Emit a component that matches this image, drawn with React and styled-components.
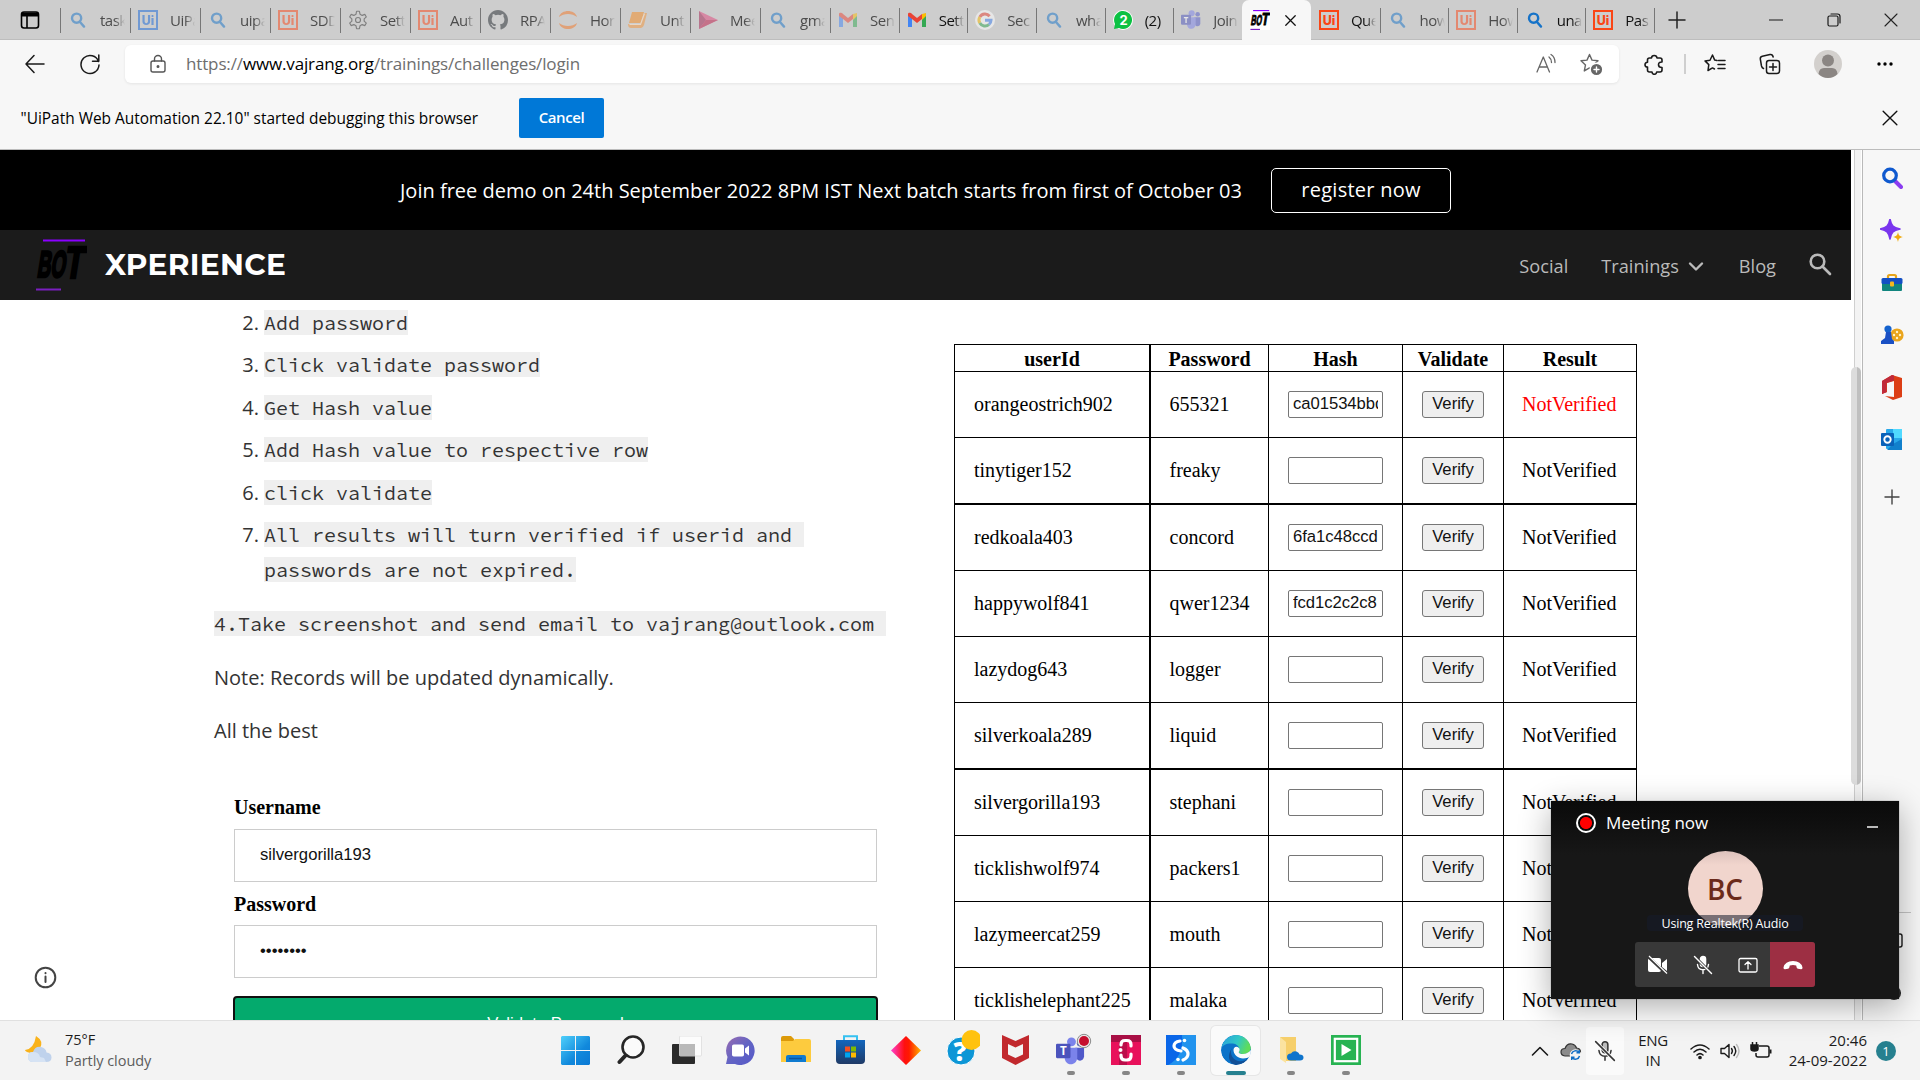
import React from "react";
import styled, { createGlobalStyle, css } from "styled-components";

const UI = `"Open Sans", "Noto Sans", sans-serif`;

const Global = createGlobalStyle`
  *, *::before, *::after { box-sizing: border-box; }
  body { margin: 0; background: #fff; overflow: hidden; }
  svg { display: block; flex: none; }
  button, input { margin: 0; }
`;

const Screen = styled.div`
  position: relative;
  display: flex;
  flex-direction: column;
  width: 1920px;
  height: 1080px;
  overflow: hidden;
  background: #fff;
  font-family: ${UI};
  color: #111;
`;

/* ---------- tab strip ---------- */

const TabStrip = styled.div`
  display: flex;
  flex: none;
  height: 40px;
  background: #cdcdcd;
  box-shadow: inset 0 -1px 0 #bdbdbd;
`;

const TabActions = styled.div`
  display: flex;
  align-items: center;
  justify-content: center;
  width: 60px;
`;

const TabItem = styled.div`
  display: flex;
  align-items: center;
  width: ${(p) => p.$w}px;
  height: 40px;
  padding-left: 8px;
  gap: 12px;
  background: linear-gradient(#777, #777) 0 8px / 1px 25px no-repeat;
  ${(p) => p.$first && css`background: none;`}
`;

const ActiveTab = styled.div`
  display: flex;
  align-items: center;
  justify-content: space-between;
  width: 69px;
  height: 40px;
  padding: 0 15px 0 8px;
  background: #f7f7f7;
  border-radius: 7px 7px 0 0;
`;

const Favicon = styled.span`
  display: flex;
  align-items: center;
  justify-content: center;
  flex: none;
  width: 20px;
  height: 20px;
  opacity: ${(p) => (p.$asleep ? 0.5 : 1)};
`;

const TabLabel = styled.span`
  width: 25px;
  overflow: hidden;
  white-space: nowrap;
  font-size: 15px;
  line-height: 22px;
  letter-spacing: -0.5px;
  color: ${(p) => (p.$asleep ? "#4c4c4c" : "#111")};
  -webkit-mask-image: linear-gradient(90deg, #000 60%, transparent 100%);
  mask-image: linear-gradient(90deg, #000 60%, transparent 100%);
`;

const NewTab = styled.div`
  display: flex;
  align-items: center;
  width: 60px;
  padding-left: 14px;
  background: linear-gradient(#777, #777) 0 8px / 1px 25px no-repeat;
`;

const WindowButtons = styled.div`
  display: flex;
  align-items: center;
  margin-left: auto;
`;

const WindowButton = styled.div`
  display: flex;
  align-items: center;
  justify-content: center;
  width: 57.5px;
  height: 40px;
`;

/* ---------- toolbar ---------- */

const Toolbar = styled.div`
  display: flex;
  align-items: center;
  flex: none;
  height: 48px;
  background: #f7f7f7;
`;

const ToolSlot = styled.div`
  display: flex;
  align-items: center;
  justify-content: center;
  width: ${(p) => p.$w}px;
  height: 38px;
`;

const AddressBar = styled.div`
  display: flex;
  align-items: center;
  width: 1494px;
  height: 38px;
  padding: 0 16px 0 23px;
  background: #fff;
  border-radius: 6px;
  box-shadow: 0 1px 3px rgba(0, 0, 0, 0.08);
`;

const Url = styled.div`
  margin-left: 18px;
  font-size: 17px;
  line-height: 24px;
  letter-spacing: -0.14px;
  color: #6e6e6e;
  white-space: nowrap;
  b { font-weight: 400; color: #000; }
`;

const AddressActions = styled.div`
  display: flex;
  align-items: center;
  gap: 22px;
  margin-left: auto;
`;

const Divider = styled.div`
  width: 2px;
  height: 20px;
  background: #cfcfcf;
`;

const InfoBar = styled.div`
  display: flex;
  align-items: center;
  flex: none;
  height: 62px;
  padding: 0 22px 2px 20px;
  background: #f7f7f7;
  border-bottom: 1px solid #bcbcbc;
`;

const InfoText = styled.div`
  width: 499px;
  font-size: 15.45px;
  padding-left: 0.5px;
  color: #000;
  white-space: nowrap;
`;

const CancelButton = styled.div`
  display: flex;
  align-items: center;
  justify-content: center;
  width: 85px;
  height: 40px;
  margin-right: auto;
  padding-bottom: 2px;
  background: #0078d7;
  border-radius: 2px;
  color: #fff;
  font-size: 15px;
  font-weight: 600;
  letter-spacing: -0.4px;
`;

/* ---------- body ---------- */

const Body = styled.div`
  display: flex;
  flex: none;
  height: 870px;
`;

const Page = styled.div`
  display: flex;
  flex-direction: column;
  width: 1851px;
  overflow: hidden;
  background: #fff;
`;

const Banner = styled.div`
  display: flex;
  align-items: center;
  flex: none;
  height: 80px;
  padding-left: 400px;
  background: #000;
  color: #fff;
  font-size: 20px;
`;

const BannerText = styled.div`
  width: 871px;
  white-space: nowrap;
`;

const RegisterButton = styled.div`
  display: flex;
  align-items: center;
  justify-content: center;
  width: 180px;
  height: 45px;
  border: 1px solid #fff;
  border-radius: 5px;
  white-space: nowrap;
  letter-spacing: 0.25px;
  padding-bottom: 2px;
`;

const SiteNav = styled.div`
  display: flex;
  align-items: center;
  flex: none;
  height: 70px;
  padding: 0 19px 0 35px;
  background: #1b1b1b;
`;

const SiteName = styled.div`
  margin-left: 18px;
  color: #fff;
  font-family: "Montserrat", "Inter", sans-serif;
  font-weight: 700;
  font-size: 29.6px;
  letter-spacing: 0.33px;
  padding-bottom: 3px;
`;

const NavLinks = styled.div`
  display: flex;
  align-items: center;
  margin-left: auto;
  color: #bababa;
  font-size: 18.2px;
  white-space: nowrap;
`;

const NavLink = styled.div`
  display: flex;
  align-items: center;
  gap: 9px;
  margin-right: ${(p) => p.$gap}px;
  padding-top: 1px;
`;

const Content = styled.div`
  display: flex;
  align-items: flex-start;
  height: 720px;
  overflow: hidden;
`;

const InfoRail = styled.div`
  display: flex;
  align-items: flex-end;
  width: 214px;
  height: 720px;
  padding: 0 0 31px 34px;
`;

const Article = styled.div`
  width: 740px;
  padding-top: 5px;
  color: #333;
  font-size: 20px;
  line-height: 35.2px;
`;

const Steps = styled.div`
  display: flex;
  flex-direction: column;
  gap: 7.2px;
`;

const Step = styled.div`
  display: grid;
  grid-template-columns: 50px 1fr;
`;

const StepNo = styled.span`
  padding-right: 5px;
  text-align: right;
`;

const Code = styled.code`
  background: #efefef;
  font-family: "Source Code Pro", "DejaVu Sans Mono", monospace;
  font-size: 20px;
  line-height: 1;
  color: #333;
  white-space: pre;
`;

const Para = styled.div`
  margin-top: 18.4px;
  padding-top: ${(p) => p.$drop || 0}px;
  white-space: nowrap;
  height: 35.2px;
`;

const Form = styled.div`
  display: flex;
  flex-direction: column;
  width: 643px;
  margin: 44.6px 0 0 20px;
  color: #000;
`;

const Label = styled.label`
  height: 29px;
  font: 700 20px/29px "Liberation Serif", serif;
  margin-bottom: ${(p) => p.$mb || 6}px;
`;

const Field = styled.input`
  width: 643px;
  height: 53px;
  padding: 0 25px 1px;
  margin-bottom: 8px;
  border: 1px solid #ccc;
  border-radius: 0;
  font: 16.67px "Liberation Sans", sans-serif;
  color: #111;
  outline: none;
`;

const SubmitButton = styled.button`
  width: 645px;
  height: 57px;
  margin: 10px 0 0 -1px;
  border: 2px solid #101010;
  border-radius: 4px;
  background: #04aa6d;
  color: #fff;
  font: 16.67px "Liberation Sans", sans-serif;
`;

/* ---------- results table ---------- */

const Table = styled.div`
  flex: none;
  width: 683px;
  margin-top: 44px;
  border-top: 1px solid #000;
  border-left: 1px solid #000;
  font: 20px "Liberation Serif", serif;
  color: #000;
`;

const Row = styled.div`
  display: grid;
  grid-template-columns: 196px 118px 134px 101px 133px;
  height: ${(p) => p.$h}px;
  border-bottom: ${(p) => (p.$heavy ? 2 : 1)}px solid #000;
`;

const Cell = styled.div`
  display: flex;
  align-items: center;
  padding-left: ${(p) => p.$pl || 19}px;
  border-right: ${(p) => (p.$heavy ? 2 : 1)}px solid #000;
  color: ${(p) => (p.$bad ? "#f00" : "inherit")};
`;

const HeadCell = styled(Cell)`
  justify-content: center;
  padding: 2px 0 0;
  font-weight: 700;
`;

const HashInput = styled.input`
  width: 95px;
  height: 27px;
  padding: 1px 4px 2px;
  border: 1px solid #767676;
  border-radius: 2px;
  font: 16.67px "Liberation Sans", sans-serif;
  letter-spacing: -0.05px;
  color: #111;
`;

const VerifyButton = styled.button`
  width: 62px;
  height: 27px;
  padding: 0 0 1px;
  border: 1px solid #767676;
  border-radius: 3px;
  background: #efefef;
  font: 16.67px "Liberation Sans", sans-serif;
  color: #111;
`;

/* ---------- scrollbar and sidebar ---------- */

const ScrollTrack = styled.div`
  width: 11px;
  padding-top: 217px;
  background: linear-gradient(90deg, #fff 3px, #cfcfcf 3px 4px, #f3f3f3 4px 10px, #fff 10px);
`;

const ScrollThumb = styled.div`
  width: 10px;
  height: 418px;
  border-radius: 5px;
  background: linear-gradient(90deg, #dcdcdc 5.5px, #bfbfbf 5.5px);
`;

const Sidebar = styled.div`
  display: flex;
  flex-direction: column;
  align-items: center;
  flex: 1;
  padding-top: 2px;
  background: #f7f7f7;
  border-left: 1px solid #b9b9b9;
`;

const SideSlot = styled.div`
  display: flex;
  align-items: center;
  justify-content: center;
  width: 100%;
  height: ${(p) => p.$h || 52.4}px;
`;

const SideFooter = styled.div`
  display: flex;
  flex-direction: column;
  align-items: flex-start;
  gap: 36px;
  width: 48px;
  margin-top: auto;
  margin-bottom: 18px;
  padding: 20px 0 0 17px;
  background: linear-gradient(#c4c4c4, #c4c4c4) 0 2px / 43px 1px no-repeat;
`;

/* ---------- call window ---------- */

const CallWindow = styled.div`
  position: absolute;
  left: 1551px;
  top: 801px;
  display: flex;
  flex-direction: column;
  align-items: center;
  width: 348px;
  height: 198px;
  background: linear-gradient(#0a0a0a, #171717 54px);
  box-shadow: 0 0 1px #777, 0 8px 30px rgba(0, 0, 0, 0.32);
`;

const CallHeader = styled.div`
  display: flex;
  align-items: center;
  width: 100%;
  height: 43px;
  padding: 0 21px 0 25px;
  color: #fff;
  font-size: 17px;
`;

const RecordDot = styled.span`
  width: 20px;
  height: 20px;
  margin-right: 10px;
  border: 2px solid #fff;
  border-radius: 50%;
  background: radial-gradient(circle, #f00 5.6px, #0a0a0a 6.4px);
`;

const CallTitle = styled.span`
  letter-spacing: -0.05px;
  white-space: nowrap;
`;

const Minimise = styled.span`
  width: 11px;
  height: 2px;
  margin: 8px 0 0 auto;
  background: #bbb;
`;

const CallAvatar = styled.div`
  display: flex;
  align-items: center;
  justify-content: center;
  flex: none;
  width: 75px;
  height: 75px;
  margin-top: 7px;
  border-radius: 50%;
  background: linear-gradient(#dcc2bc, #f1d5cd 14px);
  color: #6b2a1a;
  font-size: 28px;
  font-weight: 600;
`;

const CallNote = styled.div`
  display: flex;
  align-items: center;
  justify-content: center;
  flex: none;
  width: 156px;
  height: 16px;
  margin-top: -11px;
  border-radius: 4px;
  background: rgba(22, 27, 44, 0.55);
  color: #fff;
  font-size: 12.5px;
  letter-spacing: -0.18px;
  white-space: nowrap;
`;

const CallControls = styled.div`
  display: flex;
  width: 180px;
  height: 45px;
  margin-top: 11px;
  border-radius: 3px;
  overflow: hidden;
  background: #383838;
`;

const CallControl = styled.div`
  display: flex;
  align-items: center;
  justify-content: center;
  width: 45px;
  height: 45px;
  background: ${(p) => (p.$end ? "#9d2f43" : "transparent")};
`;

/* ---------- taskbar ---------- */

const Taskbar = styled.div`
  display: flex;
  flex: none;
  height: 60px;
  background: #f3f3f3;
  border-top: 1px solid #e0e0e0;
  font-size: 15px;
`;

const Weather = styled.div`
  display: flex;
  align-items: center;
  gap: 12px;
  width: 548px;
  padding: 0 0 2px 25px;
`;

const WeatherText = styled.div`
  display: flex;
  flex-direction: column;
  font-size: 14.5px;
  line-height: 20.5px;
  padding-top: 2px;
  letter-spacing: -0.05px;
  color: #1b1b1b;
  span:last-child { color: #5c5c5c; }
`;

const Apps = styled.div`
  display: flex;
  padding-top: 5px;
`;

const TaskApp = styled.div`
  position: relative;
  display: flex;
  align-items: center;
  justify-content: center;
  width: 55px;
  height: 49px;
`;

const AppTile = styled.div`
  display: flex;
  align-items: center;
  justify-content: center;
  width: 49px;
  height: 49px;
  padding-bottom: 1px;
  border-radius: 5px;
  ${(p) => p.$on && css`background: #fafafa; box-shadow: 0 0 0 1px #e6e6e6;`}
`;

const Running = styled.span`
  position: absolute;
  left: 50%;
  bottom: 0;
  width: ${(p) => (p.$on ? 20 : 8)}px;
  height: 4px;
  transform: translateX(-50%);
  border-radius: 2px;
  background: ${(p) => (p.$on ? "#26808f" : "#868686")};
`;

const Tray = styled.div`
  display: flex;
  align-items: center;
  margin-left: auto;
  padding-right: 24px;
  color: #1b1b1b;
`;

const TraySlot = styled.div`
  display: flex;
  align-items: center;
  justify-content: center;
  width: ${(p) => p.$w}px;
  height: 48px;
  border-radius: 4px;
  background: ${(p) => (p.$on ? "#fafafa" : "transparent")};
`;

const Stack = styled.div`
  display: flex;
  flex-direction: column;
  width: ${(p) => p.$w}px;
  text-align: ${(p) => p.$align};
  line-height: 20px;
  letter-spacing: ${(p) => p.$ls || 0}px;
  font-size: 15px;
  padding-bottom: 2px;
`;

const Badge = styled.div`
  display: flex;
  align-items: center;
  justify-content: center;
  width: 20px;
  height: 20px;
  margin-left: 9px;
  border-radius: 50%;
  background: #26808f;
  color: #fff;
  font-size: 13px;
`;

/* ---------- icons ---------- */

const Line = ({ s = 20, vb = 20, c = "#1a1a1a", w = 1.4, d, children }) => (
  <svg width={s} height={s} viewBox={`0 0 ${vb} ${vb}`} fill="none" stroke={c} strokeWidth={w} strokeLinecap="round" strokeLinejoin="round">
    {d && <path d={d} />}
    {children}
  </svg>
);

const SearchFav = () => (
  <Line c="#1673c8" w={2.4}>
    <circle cx="8.6" cy="8.2" r="4.6" /><path d="M12 12l4 4.6" />
  </Line>
);

const UiFav = ({ c = "#fa4616" }) => (
  <svg width="20" height="20">
    <rect x="1" y="1" width="18" height="18" fill="none" stroke={c} strokeWidth="2" />
    <text x="10" y="15" textAnchor="middle" fontFamily="Inter, sans-serif" fontWeight="800" fontSize="12.5" fill={c}>Ui</text>
  </svg>
);

const GearFav = () => (
  <Line c="#333" w={1.4} vb={24}>
    <circle cx="12" cy="12" r="3" />
    <path d="M10.3 1.500h3.4l.7 3.500 2.600 1.500 3.300-1.200 1.700 3-2.600 2.300v2.800l2.600 2.300-1.700 3-3.300-1.200-2.600 1.500-.7 3.500h-3.400l-.7-3.500L7 17.500l-3.300 1.200-1.700-3 2.600-2.300v-2.800L2 8.300l1.700-3L7 6.500 9.600 5z" />
  </Line>
);

const GithubFav = () => (
  <svg width="20" height="20" viewBox="0 0 16 16" fill="#24292f">
    <path d="M8 0C3.580 0 0 3.580 0 8c0 3.540 2.290 6.530 5.470 7.590.4.070.55-.17.55-.38 0-.19-.01-.82-.01-1.490-2.010.37-2.530-.49-2.690-.94-.09-.23-.48-.94-.82-1.130-.28-.15-.68-.52-.01-.53.63-.01 1.080.58 1.230.82.72 1.210 1.870.87 2.330.66.07-.52.28-.87.51-1.070-1.780-.2-3.640-.89-3.640-3.950 0-.87.31-1.590.82-2.150-.08-.2-.36-1.020.08-2.120 0 0 .67-.21 2.200.82a7.600 7.600 0 0 1 4 0c1.530-1.040 2.200-.82 2.200-.82.44 1.100.16 1.920.08 2.120.51.56.82 1.270.82 2.150 0 3.070-1.870 3.750-3.650 3.950.29.25.54.73.54 1.480 0 1.070-.01 1.930-.01 2.200 0 .21.15.46.55.38A8.010 8.010 0 0 0 16 8c0-4.420-3.580-8-8-8z" />
  </svg>
);

const JupyterFav = () => (
  <svg width="20" height="20" fill="#f37726">
    <path d="M1 7C3-1 17-1 19 7 14 3 6 3 1 7zM1 13c2 8 16 8 18 0-5 4-13 4-18 0z" />
  </svg>
);

const NotebookFav = () => (
  <svg width="20" height="20">
    <path d="M4 2h12l-3 11H1z" fill="#f58a1f" /><path d="M0 14h12l4-11h3l-3 12q-1 3-3 3H3q-3 0-3-4z" fill="#f3953a" />
    <path d="M1.500 14.500h11l4-11" fill="none" stroke="#ffe2c4" strokeWidth="1.200" />
  </svg>
);

const StreamFav = () => (
  <svg width="20" height="20">
    <path d="M1 1l19 9-19 9z" fill="#e0457b" /><path d="M1 1l7 9-7 9z" fill="#a3204f" /><path d="M1 19l7-9h12z" fill="#bc1948" />
  </svg>
);

const GmailFav = () => (
  <svg width="20" height="20">
    <path d="M1 5v12h4V8z" fill="#4285f4" /><path d="M15 8v9h4V5z" fill="#34a853" />
    <path d="M15 4l4-1v3l-4 4z" fill="#fbbc04" /><path d="M1 4c0-1 2-2 4 0l5 4 5-4v5l-5 4-5-4-4-3z" fill="#ea4335" />
  </svg>
);

const GoogleFav = () => (
  <svg width="20" height="20" fill="none" strokeWidth="3">
    <circle cx="10" cy="10" r="10" fill="#fff" />
    <path d="M14.600 6.200A6 6 0 0 0 4.800 7" stroke="#ea4335" /><path d="M4.800 7a6 6 0 0 0 0 6" stroke="#fbbc04" />
    <path d="M4.800 13a6 6 0 0 0 9.200 1.500" stroke="#34a853" /><path d="M14 14.500a6 6 0 0 0 2-4.300h-6" stroke="#4285f4" />
  </svg>
);

const WhatsappFav = () => (
  <svg width="20" height="20">
    <circle cx="10" cy="10" r="10" fill="#fff" /><path d="M1 19l1-5a9 9 0 1 1 4 4z" fill="#0cc143" />
    <text x="10.500" y="15" textAnchor="middle" fontFamily="Inter, sans-serif" fontWeight="700" fontSize="13" fill="#fff">2</text>
  </svg>
);

const TeamsIcon = ({ s = 20 }) => (
  <svg width={s} height={s} viewBox="0 0 30 30">
    <circle cx="16" cy="5" r="4.600" fill="#7b83eb" /><circle cx="25" cy="6.500" r="3.400" fill="#5059c9" />
    <path d="M20 11h9v9c0 5-6 6-8 2z" fill="#5059c9" /><path d="M9 11h13v10c0 9-12 10-13 1z" fill="#7b83eb" />
    <rect x="0" y="7" width="15" height="15" rx="1.200" fill="#4b53bc" />
    <text x="7.500" y="19" textAnchor="middle" fontFamily="Open Sans, sans-serif" fontWeight="700" fontSize="12" fill="#fff">T</text>
  </svg>
);

const BotLogo = ({ w, h, bg }) => (
  <svg width={w} height={h} viewBox="0 0 52 52">
    {bg && <rect width="52" height="52" fill={bg} />}
    <path d="M8 1.500h42" stroke="#8a00ff" strokeWidth={bg ? 3 : 2} />
    <path d="M1 50.500h25" stroke="#7a1fc0" strokeWidth={bg ? 3 : 2} />
    <g transform="skewX(-9)" fill="#000" stroke="#000" strokeWidth="2.600" fontFamily="Liberation Sans Narrow, Liberation Sans, sans-serif" fontWeight="700">
      <text x="7.500" y="38.500" fontSize="37" textLength="28" lengthAdjust="spacingAndGlyphs">BO</text>
      <text x="34.500" y="38.500" fontSize="45" textLength="19" lengthAdjust="spacingAndGlyphs">T</text>
    </g>
  </svg>
);

const Cross = ({ s = 14, c = "#222", w = 1.200 }) => <Line s={s} vb={14} c={c} w={w} d="M1 1l12 12M13 1L1 13" />;

const star = "M10 1.500l2.500 5.600 6 .7-4.500 4.100 1.200 6-5.200-3-5.200 3 1.200-6L1.500 7.800l6-.7z";

const SideIcons = {
  search: (
    <svg width="22" height="22">
      <path d="M14 14l6 6" stroke="#8b3df0" strokeWidth="4" strokeLinecap="round" />
      <circle cx="9" cy="8.500" r="6.300" fill="none" stroke="#0f59cf" strokeWidth="3.200" />
    </svg>
  ),
  spark: (
    <svg width="24" height="24">
      <path d="M10 0c1.500 7 3 8.500 10 10-7 1.500-8.500 3-10 10-1.500-7-3-8.500-10-10 7-1.500 8.500-3 10-10z" fill="#7a35ee" stroke="#7a35ee" strokeWidth="1.500" strokeLinejoin="round" />
      <path d="M18 13c.8 3.500 1.500 4.200 5 5-3.500.8-4.200 1.500-5 5-.8-3.500-1.500-4.200-5-5 3.500-.8 4.200-1.500 5-5z" fill="#f0ab10" />
    </svg>
  ),
  tools: (
    <svg width="22" height="20">
      <path d="M7 5V3.500Q7 2 8.500 2h5Q15 2 15 3.500V5" fill="none" stroke="#e7a51b" strokeWidth="2.200" />
      <rect x="1" y="8" width="20" height="10" rx="1" fill="#11857e" /><rect x="0.500" y="5" width="21" height="6" rx="1.500" fill="#134fc4" />
      <rect x="9" y="8.500" width="4" height="5" rx="1" fill="#f3b71f" />
    </svg>
  ),
  games: (
    <svg width="24" height="20">
      <circle cx="17" cy="10" r="6.600" fill="#eaa51d" />
      <g fill="#fff3c9"><circle cx="17" cy="7" r="1.200" /><circle cx="14" cy="10" r="1.200" /><circle cx="20" cy="10" r="1.200" /><circle cx="17" cy="13" r="1.200" /></g>
      <circle cx="8" cy="4" r="3.600" fill="#1462ce" /><path d="M6 7h5l1 7 2 2v3H1v-3l4-3z" fill="#1a50c4" />
    </svg>
  ),
  office: (
    <svg width="22" height="25">
      <path d="M11 0l10 3v19l-9 3-8-4 9 1V6L6 8v9l-5 2V6z" fill="#dc3e15" />
      <path d="M11 0l2 .6V5.500L5.500 8v9.300L1 19V6z" fill="#c02a3a" />
    </svg>
  ),
  outlook: (
    <svg width="22" height="22">
      <rect x="5" y="0" width="16" height="20" rx="1" fill="#28a8ea" /><rect x="12" y="0" width="9" height="9" fill="#50d9ff" />
      <path d="M6 21h15V10l-9 5z" fill="#1180cc" /><rect x="0" y="4" width="13" height="13" rx="1" fill="#0a62b9" />
      <circle cx="6.500" cy="10.500" r="3.200" fill="none" stroke="#fff" strokeWidth="1.900" />
    </svg>
  ),
  add: <Line s={16} vb={16} c="#444" w={1.400} d="M8 1v14M1 8h14" />,
};

const WinIcon = () => (
  <svg width="29" height="29">
    <defs><linearGradient id="win" x1="0" y1="0" x2="1" y2="1"><stop offset="0" stopColor="#4fd0fb" /><stop offset=".6" stopColor="#1189dc" /><stop offset="1" stopColor="#0a78d4" /></linearGradient></defs>
    <path d="M1 0h13v14H0V1zM15 0h13l1 1v13H15zM0 15h14v14H1l-1-1zM15 15h14v13l-1 1H15z" fill="url(#win)" />
  </svg>
);

const SearchTask = () => (
  <svg width="28" height="30" fill="none" stroke="#262626" strokeLinecap="round">
    <circle cx="16" cy="12" r="10.500" strokeWidth="2.600" fill="#fafafa" /><path d="M8.500 20.500L2.500 27" strokeWidth="4" />
  </svg>
);

const ViewsIcon = () => (
  <svg width="32" height="28">
    <rect x="2" y="8" width="23" height="20" rx="1" fill="#2a2a2a" /><rect x="9.500" y="0" width="22" height="20" rx="1" fill="#fcfcfc" stroke="#dcdcdc" strokeWidth=".8" />
    <rect x="9.500" y="8" width="15.500" height="12" fill="#b9b9b9" />
  </svg>
);

const ChatIcon = () => (
  <svg width="29" height="29">
    <defs><linearGradient id="chat" x1="0" y1="0" x2="1" y2="1"><stop offset="0" stopColor="#9a6bb0" /><stop offset=".5" stopColor="#6264c4" /><stop offset="1" stopColor="#5558c8" /></linearGradient></defs>
    <path d="M0 28l1.500-7A14.300 14.300 0 1 1 9 28z" fill="url(#chat)" /><rect x="6" y="8.500" width="12" height="12" rx="1.800" fill="#fff" /><path d="M19 12.500l4-3v10l-4-3z" fill="#fff" />
  </svg>
);

const FolderIcon = () => (
  <svg width="30" height="28">
    <path d="M0 2q0-2 2-2h8l3 3v4H0z" fill="#dc9a0a" /><path d="M0 5h12l2-2h14q2 0 2 2v21H0z" fill="#fdcb3e" />
    <path d="M5 26v-5q0-2 2-2h16q2 0 2 2v5z" fill="#0f7bd0" /><path d="M8 22.500h13" stroke="#0a559e" strokeWidth="1.500" />
  </svg>
);

const StoreIcon = () => (
  <svg width="29" height="30">
    <defs><linearGradient id="store" x1="0" y1="0" x2="0" y2="1"><stop offset="0" stopColor="#1266bd" /><stop offset="1" stopColor="#1f3a66" /></linearGradient></defs>
    <path d="M8 6V1.200h13V6" fill="none" stroke="#35c1f1" strokeWidth="2" /><path d="M0 5h29v20q0 4-4 4H4q-4 0-4-4z" fill="url(#store)" />
    <path d="M9 11.500h5v5H9z" fill="#f25022" /><path d="M15 11.500h5v5h-5z" fill="#7fba00" /><path d="M9 17.500h5v5H9z" fill="#00a4ef" /><path d="M15 17.500h5v5h-5z" fill="#ffb900" />
  </svg>
);

const DiamondIcon = () => (
  <svg width="30" height="29">
    <defs><linearGradient id="dia"><stop offset="0" stopColor="#ff3fd0" /><stop offset=".45" stopColor="#ff1010" /><stop offset=".6" stopColor="#ff1a00" /><stop offset="1" stopColor="#ffb400" /></linearGradient></defs>
    <path d="M15 0l15 14.500L15 29 0 14.500z" fill="url(#dia)" />
  </svg>
);

const HelpIcon = () => (
  <svg width="38" height="40">
    <circle cx="19" cy="21" r="14" fill="#0d96d6" stroke="#fff" strokeWidth="1" />
    <text x="18" y="31" textAnchor="middle" fontFamily="Open Sans, sans-serif" fontWeight="800" fontSize="26" fill="#fff">?</text>
    <circle cx="29.500" cy="10" r="10" fill="#ffc20e" />
  </svg>
);

const ShieldIcon = () => (
  <svg width="27" height="30">
    <path d="M0 0l13.500 6L27 0v23l-13.500 7L0 23z" fill="#c1282d" /><path d="M6 9l7.500 3.500L21 9v10.500L13.500 23 6 19.500z" fill="#f3f3f3" />
  </svg>
);

const TeamsTask = () => (
  <svg width="32" height="32" overflow="visible">
    <g transform="translate(1 3)"><TeamsIcon s={29} /></g>
    <circle cx="29" cy="7" r="6.700" fill="#e9e9e9" stroke="#8c8c8c" strokeWidth="1" /><circle cx="29" cy="7" r="5" fill="#c50f2e" />
  </svg>
);

const CIcon = () => (
  <svg width="30" height="30">
    <rect width="30" height="30" fill="#e8115b" /><path d="M0 0h30v7H0z" fill="#a80f45" /><path d="M8 7h8v23H8z" fill="#bb0e4a" />
    <path d="M20 11V9.500q0-4-4-4h-2q-4 0-4 4V10M20 19v2q0 4-4 4h-2q-4 0-4-4v-1" fill="none" stroke="#fff" strokeWidth="3.200" strokeLinecap="round" /><circle cx="9.500" cy="15" r="2" fill="#fff" />
  </svg>
);

const SIcon = () => (
  <svg width="30" height="30">
    <rect width="30" height="30" fill="#0a66e8" /><path d="M16 0h14v30H2q16-8 14-30z" fill="#2193ee" />
    <path d="M14 6q-6 1-6 5t7 5M17 13q5 2 5 6t-5 6" fill="none" stroke="#fff" strokeWidth="3.200" strokeLinecap="round" />
    <circle cx="18.500" cy="5.500" r="1.800" fill="#fff" /><circle cx="12" cy="24.500" r="1.800" fill="#fff" />
  </svg>
);

const EdgeIcon = () => (
  <svg width="30" height="30">
    <defs>
      <linearGradient id="e1" x1="0" y1="0" x2="1" y2="0.300"><stop offset="0" stopColor="#2a9de0" /><stop offset=".6" stopColor="#30c8c6" /><stop offset="1" stopColor="#5fdc5a" /></linearGradient>
      <clipPath id="disc"><circle cx="15" cy="15" r="15" /></clipPath>
    </defs>
    <g clipPath="url(#disc)">
      <circle cx="15" cy="15" r="15" fill="#0c73c9" />
      <path d="M0 14C2 5 8 0 15 0c9 0 15 6 15 12 0 5-4 7-8 7-3 0-5-1-4-2.500 1-2 .5-7-6-8C6 8 1 10 0 14z" fill="url(#e1)" />
      <path d="M12 12c-4 4-2 12 5 14 4 1 8-.5 10.500-3C25 27 20 30 15 30 8 29 5 20 12 12z" fill="#114f96" />
      <path d="M12.500 15c0-3 3-4.500 5.500-2 1 1.200.7 2.700 0 3.500-1 1.500 1 2.500 4 2.500 3 0 6-1.500 8.500-4.500l.5 6c-2 2-5 3-9 3-5-.5-9.500-3.500-9.500-8.500z" fill="#f9fbfb" />
    </g>
  </svg>
);

const CloudFolder = () => (
  <svg width="26" height="28">
    <path d="M2 1h16v24H6z" fill="#f6cf6b" /><path d="M2 1l6 5v21l-6-4z" fill="#fbe3a0" />
    <path d="M13 24q-4 0-4-3.500t4-3.500q2-3 5.500-2 2.500.8 3 3 4 .2 4 3t-3.500 3z" fill="#0f74cc" transform="translate(0 .5)" />
  </svg>
);

const PlayIcon = () => (
  <svg width="30" height="30">
    <rect width="30" height="30" fill="#27b352" /><rect x="3.800" y="3.800" width="22.400" height="22.400" fill="none" stroke="#fff" strokeWidth="2.200" /><path d="M10.500 9l10 6-10 6z" fill="#fff" />
  </svg>
);

const MicOff = ({ s, c }) => (
  <svg width={s} height={s} viewBox="0 0 20 20" fill="none" stroke={c} strokeWidth="1.400" strokeLinecap="round">
    <rect x="7.400" y="1.500" width="5.200" height="10" rx="2.600" fill={c === "#fff" ? c : "#bbb"} /><path d="M4.500 9.500q.5 5.300 5.500 5.300t5.500-5.300M10 15v3.500" /><path d="M1.500 1.500l17 17" stroke={c === "#fff" ? "#383838" : "#fafafa"} strokeWidth="3" /><path d="M1.500 1.500l17 17" />
  </svg>
);

/* ---------- data ---------- */

const ui = <UiFav />;
const tabsLeft = [
  ["task", <SearchFav />, 1], ["UiPa", <UiFav c="#1667d9" />, 1], ["uipa", <SearchFav />, 1], ["SDD", ui, 1], ["Setti", <GearFav />, 1],
  ["Aut", ui, 1], ["RPA", <GithubFav />, 1], ["Hor", <JupyterFav />, 1], ["Unt", <NotebookFav />, 1], ["Mee", <StreamFav />, 1], ["gma", <SearchFav />, 1],
  ["Sen", <GmailFav />, 1], ["Setti", <GmailFav />, 0], ["Sec", <GoogleFav />, 1], ["wha", <SearchFav />, 1], ["(2)", <WhatsappFav />, 0], ["Join", <TeamsIcon />, 1],
];
const tabsRight = [
  ["Que", ui, 0], ["how", <SearchFav />, 1], ["How", ui, 1], ["una", <SearchFav />, 0], ["Pas", ui, 0],
];

const steps = [
  [2, "Add password"], [3, "Click validate password"], [4, "Get Hash value"], [5, "Add Hash value to respective row"],
  [6, "click validate"], [7, "All results will turn verified if userid and \npasswords are not expired."],
];

const records = [
  ["orangeostrich902", "655321", "ca01534bbd2"], ["tinytiger152", "freaky", ""], ["redkoala403", "concord", "6fa1c48ccd"],
  ["happywolf841", "qwer1234", "fcd1c2c2c8"], ["lazydog643", "logger", ""], ["silverkoala289", "liquid", ""],
  ["silvergorilla193", "stephani", ""], ["ticklishwolf974", "packers1", ""], ["lazymeercat259", "mouth", ""], ["ticklishelephant225", "malaka", ""],
];
const heavyRows = [1, 5];

const apps = [
  [<WinIcon />], [<SearchTask />], [<ViewsIcon />], [<ChatIcon />], [<FolderIcon />], [<StoreIcon />], [<DiamondIcon />], [<HelpIcon />], [<ShieldIcon />],
  [<TeamsTask />, 1], [<CIcon />, 1], [<SIcon />, 1], [<EdgeIcon />, 2], [<CloudFolder />, 1], [<PlayIcon />, 1],
];

const Tab = ({ label, icon, asleep, w, first }) => (
  <TabItem $w={w} $first={first}>
    <Favicon $asleep={asleep}>{icon}</Favicon>
    <TabLabel $asleep={asleep}>{label}</TabLabel>
  </TabItem>
);

export default function App() {
  return (
    <Screen>
      <Global />
      <TabStrip>
        <TabActions>
          <svg width="20" height="20" fill="none" stroke="#000" strokeWidth="1.600"><rect x="1.500" y="2" width="17" height="16" rx="2.500" /><path d="M2 4.500h16" strokeWidth="4" /><path d="M7 6v12" /></svg>
        </TabActions>
        {tabsLeft.map(([l, i, z], k) => <Tab key={k} label={l} icon={i} asleep={!!z} w={k < 11 ? 70 : 68.667} />)}
        <ActiveTab><Favicon><BotLogo w={20} h={20} bg="#fff" /></Favicon><Cross s={11} c="#111" w={1.600} /></ActiveTab>
        {tabsRight.map(([l, i, z], k) => <Tab key={k} label={l} icon={i} asleep={!!z} w={68.6} first={k === 0} />)}
        <NewTab><Line s={18} vb={18} c="#222" w={1.500} d="M9 1v16M1 9h16" /></NewTab>
        <WindowButtons>
          <WindowButton><Line s={14} vb={14} w={1.200} d="M.5 7h13" /></WindowButton>
          <WindowButton><Line s={14} vb={14} w={1.200}><rect x="1" y="3" width="10" height="10" rx="1.500" /><path d="M4 1h6.500Q13 1 13 3.500V10" /></Line></WindowButton>
          <WindowButton><Cross s={14} w={1.100} /></WindowButton>
        </WindowButtons>
      </TabStrip>

      <Toolbar>
        <ToolSlot $w={70}><Line s={20} w={1.500} d="M19 10H1M9 1.500L1 10l8 8.500" /></ToolSlot>
        <ToolSlot $w={40}><Line s={22} vb={22} w={1.500} d="M19.500 8.500A9 9 0 1 0 20 12M19.800 2v6.300h-6.300" /></ToolSlot>
        <ToolSlot $w={15} />
        <AddressBar>
          <Line s={20} c="#555" w={1.400}><rect x="3" y="7" width="14" height="11" rx="2" /><path d="M6.500 7V5a3.500 3.500 0 0 1 7 0v2" /><circle cx="10" cy="12.500" r=".8" fill="#555" /></Line>
          <Url>https://<b>www.vajrang.org</b>/trainings/challenges/login</Url>
          <AddressActions>
            <Line s={22} vb={22} c="#666" w={1.300} d="M2 19L8.300 4 14.500 19M4.200 14h8.300M14 4q2.500 2 2.500 5.500M16 1.500q4 2.500 4 8" />
            <Line s={24} vb={24} c="#666" w={1.400}>
              <path d={star} transform="translate(.5 1)" /><circle cx="17.500" cy="17.500" r="6.300" fill="#666" stroke="#fff" /><path d="M17.500 15v5M15 17.500h5" stroke="#fff" />
            </Line>
          </AddressActions>
        </AddressBar>
        <ToolSlot $w={71}><Line s={21} vb={21} w={1.600} d="M7 4H5.500Q3.500 4 3.500 6v2.300Q1 8.500 1 10.700t2.500 2.400V16q0 2 2 2H8q.2 2.300 2.300 2.300T12.700 18H16q2 0 2-2v-2.500q-3.500 0-3.500-2.800T18 8V6q0-2-2-2h-3Q12.700 1.500 10.200 1.500T7.500 4z" /></ToolSlot>
        <ToolSlot $w={2} as={DividerSlot}><Divider /></ToolSlot>
        <ToolSlot $w={50}><Line s={22} vb={22} w={1.500} d="M13 7.500l-2.300-.4L8.500 2 6 7.200l-5 .7 3.800 3.700L4 17.500l4.500-2.600 2 1.100M14.500 7.500H21M14 11.500h7M14 15.500h7" /></ToolSlot>
        <ToolSlot $w={60}><Line s={22} vb={22} w={1.500}><rect x="7.500" y="7.500" width="13" height="13" rx="2.500" /><path d="M14 10.500v7M10.500 14h7M4.500 15.500Q3 15 2.500 13L1.300 6q-.3-2.300 2-2.800L11 1.500q2.500-.5 3.200 2.500" /></Line></ToolSlot>
        <ToolSlot $w={56}>
          <svg width="28" height="28"><circle cx="14" cy="14" r="14" fill="#d3d0cd" /><circle cx="14" cy="10.500" r="6" fill="#8b8683" /><path d="M4.500 24Q5 18 10 18h8q5 0 5.500 6-4 4-9.500 4t-9.500-4z" fill="#8b8683" /></svg>
        </ToolSlot>
        <ToolSlot $w={58}><svg width="18" height="6"><circle cx="3" cy="3" r="1.700" /><circle cx="9" cy="3" r="1.700" /><circle cx="15" cy="3" r="1.700" /></svg></ToolSlot>
      </Toolbar>

      <InfoBar>
        <InfoText>"UiPath Web Automation 22.10" started debugging this browser</InfoText>
        <CancelButton>Cancel</CancelButton>
        <Cross s={16} c="#111" />
      </InfoBar>

      <Body>
        <Page>
          <Banner>
            <BannerText>Join free demo on 24th September 2022 8PM IST Next batch starts from first of October 03</BannerText>
            <RegisterButton>register now</RegisterButton>
          </Banner>
          <SiteNav>
            <BotLogo w={52} h={52} />
            <SiteName>XPERIENCE</SiteName>
            <NavLinks>
              <NavLink $gap={33}>Social</NavLink>
              <NavLink $gap={35}>Trainings<Line s={16} vb={16} c="#bababa" w={2.400} d="M2 5.500l6 6 6-6" /></NavLink>
              <NavLink $gap={32}>Blog</NavLink>
              <Line s={24} vb={24} c="#bababa" w={2.600}><circle cx="9.500" cy="8.500" r="6.800" /><path d="M14.500 13.500L22 21" /></Line>
            </NavLinks>
          </SiteNav>
          <Content>
            <InfoRail>
              <Line s={23} vb={23} c="#444" w={2}><circle cx="11.500" cy="11.500" r="9.800" /><path d="M11.500 10.500v5.500M11.500 7v.2" /></Line>
            </InfoRail>
            <Article>
              <Steps>
                {steps.map(([n, t]) => <Step key={n}><StepNo>{n}.</StepNo><span><Code>{t}</Code></span></Step>)}
              </Steps>
              <Para><Code>{"4.Take screenshot and send email to vajrang@outlook.com "}</Code></Para>
              <Para $drop={1}>Note: Records will be updated dynamically.</Para>
              <Para>All the best</Para>
              <Form>
                <Label $mb={7}>Username</Label>
                <Field defaultValue="silvergorilla193" />
                <Label>Password</Label>
                <Field type="password" defaultValue="stephani" />
                <SubmitButton>Validate Password</SubmitButton>
              </Form>
            </Article>
            <Table>
              <Row $h={27}>
                {["userId", "Password", "Hash", "Validate", "Result"].map((h, i) => <HeadCell key={h} $heavy={i === 0}>{h}</HeadCell>)}
              </Row>
              {records.map(([id, pw, hash], i) => (
                <Row key={id} $h={heavyRows.includes(i) ? 67 : 66} $heavy={heavyRows.includes(i)}>
                  <Cell $heavy>{id}</Cell>
                  <Cell $pl={18.5}>{pw}</Cell>
                  <Cell><HashInput defaultValue={hash} /></Cell>
                  <Cell><VerifyButton>Verify</VerifyButton></Cell>
                  <Cell $pl={18} $bad={i === 0}>NotVerified</Cell>
                </Row>
              ))}
            </Table>
          </Content>
        </Page>
        <ScrollTrack><ScrollThumb /></ScrollTrack>
        <Sidebar>
          {["search", "spark", "tools", "games", "office", "outlook"].map((k) => <SideSlot key={k}>{SideIcons[k]}</SideSlot>)}
          <SideSlot $h={62}>{SideIcons.add}</SideSlot>
          <SideFooter>
            <Line s={18} vb={18}><rect x="1" y="4" width="16" height="13" rx="2" /></Line>
            <Line s={18} vb={18} w={2}><circle cx="9" cy="9" r="6" /><circle cx="9" cy="9" r="2" /></Line>
          </SideFooter>
        </Sidebar>
      </Body>

      <Taskbar>
        <Weather>
          <svg width="28" height="28">
            <path d="M11 0q8 5 4 12T2 16q-2-1-2-2 9-1 11-14z" fill="#f9b21a" /><path d="M8 26q-5 0-5-5t5-5q2-6 8-5 5 1 5.500 5.500 5 .5 5 5T21 26z" fill="#bfd2ec" /><path d="M8 26q-5 0-5-5t5-5q6 0 7 5l4 1 2 4z" fill="#d6e3f4" />
          </svg>
          <WeatherText><span>75°F</span><span>Partly cloudy</span></WeatherText>
        </Weather>
        <Apps>
          {apps.map(([icon, run], i) => (
            <TaskApp key={i}><AppTile $on={run === 2}>{icon}</AppTile>{run && <Running $on={run === 2} />}</TaskApp>
          ))}
        </Apps>
        <Tray>
          <TraySlot $w={30}><Line s={18} vb={18} w={1.600} d="M1.500 13L9 5.500l7.500 7.500" /></TraySlot>
          <TraySlot $w={31}>
            <svg width="22" height="20"><path d="M5 15q-4-.5-4-4t4-3.500Q7 2 12 3q3.500.8 4.500 4 4 .3 4 4T17 15z" fill="#8b8b8b" stroke="#333" strokeWidth="1.200" /><circle cx="15.500" cy="14" r="5.800" fill="#f3f3f3" /><path d="M11.500 13a4.200 4.200 0 0 1 7.500-1.500M19.500 15a4.200 4.200 0 0 1-7.500 1.500M19.300 9v2.800h-2.800M11.700 19v-2.800h2.800" fill="none" stroke="#0f6cc4" strokeWidth="1.400" /></svg>
          </TraySlot>
          <TraySlot $w={38} $on><MicOff s={22} c="#333" /></TraySlot>
          <TraySlot $w={58}><Stack $w={40} $align="center" $ls={-0.3}><span>ENG</span><span>IN</span></Stack></TraySlot>
          <TraySlot $w={36}>
            <Line s={20} w={1.500}><path d="M1 8q9-8 18 0M4 11q6-5.500 12 0M7 14q3-2.800 6 0" /><circle cx="10" cy="16.500" r="1.100" fill="#1a1a1a" /></Line>
          </TraySlot>
          <TraySlot $w={24}>
            <Line s={20} w={1.400}><path d="M1 7.500h3.500L9 3.500v13l-4.500-4H1z" /><path d="M11.500 7.500q1.800 2.500 0 5M14 5.500q3.500 4.500 0 9" /><path d="M16.500 3.500q5 6.500 0 13" stroke="#bbb" /></Line>
          </TraySlot>
          <TraySlot $w={38}>
            <svg width="22" height="20" fill="none" stroke="#1a1a1a" strokeWidth="1.500"><path d="M9 5h8q2 0 2 2v7q0 2-2 2H8q-2 0-2-2v-2" /><path d="M20.500 8.500v4" strokeWidth="2" /><path d="M1 4h7v4q0 2-3.500 2T1 8zM2.500 1v3M6.500 1v3" fill="#1a1a1a" /></svg>
          </TraySlot>
          <Stack $w={87} $align="right"><span>20:46</span><span>24-09-2022</span></Stack>
          <Badge>1</Badge>
        </Tray>
      </Taskbar>

      <CallWindow>
        <CallHeader><RecordDot /><CallTitle>Meeting now</CallTitle><Minimise /></CallHeader>
        <CallAvatar>BC</CallAvatar>
        <CallNote>Using Realtek(R) Audio</CallNote>
        <CallControls>
          <CallControl>
            <svg width="20" height="20" fill="#fff"><rect x="0" y="3" width="13" height="14" rx="2" /><path d="M14 8l5-4v12l-5-4z" /><path d="M0 1.500l18 17" stroke="#383838" strokeWidth="3" /><path d="M1 1l18 17.500" stroke="#fff" strokeWidth="1.200" /></svg>
          </CallControl>
          <CallControl><MicOff s={20} c="#fff" /></CallControl>
          <CallControl><Line s={20} c="#fff" w={1.300}><rect x="1" y="3.500" width="18" height="13.500" rx="1.500" /><path d="M10 14V7M7 9.500L10 6.700l3 2.800" /></Line></CallControl>
          <CallControl $end><svg width="20" height="12"><path d="M.5 8.500Q2 2 10 2t9.500 6.500q.2 2-1.500 1.800l-3-.5q-1.200-.2-1.400-1.500L13.200 6.500q-3.200-1-6.400 0L6.400 8.300Q6.200 9.600 5 9.800l-3 .5Q.3 10.500.5 8.500z" fill="#fff" /></svg></CallControl>
        </CallControls>
      </CallWindow>
    </Screen>
  );
}

function DividerSlot({ children }) {
  return <DividerBox>{children}</DividerBox>;
}

const DividerBox = styled.div`
  display: flex;
  align-items: center;
  flex: none;
  width: 2px;
  height: 38px;
  margin: 0 4px 0 -6px;
`;
